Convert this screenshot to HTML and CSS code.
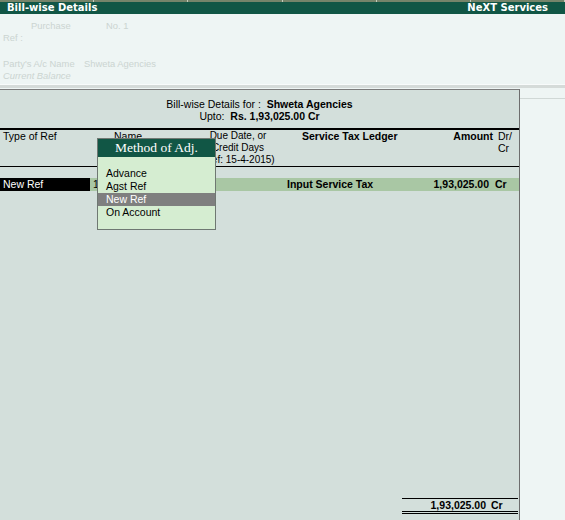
FILE: index.html
```html
<!DOCTYPE html>
<html>
<head>
<meta charset="utf-8">
<link rel="stylesheet" href="styles.css">
</head>
<body>
<div class="topstrip"><span></span><span></span><span></span><span></span><span></span><span></span></div>
<div class="titlebar"><span>Bill-wise Details</span><span>NeXT Services</span></div>
<div class="voucher">
  <div class="vrow"><span class="v-type">Purchase</span><span class="v-no">No. 1</span></div>
  <div class="vrow"><span>Ref :</span></div>
  <div class="vrow gap"><span class="v-label">Party's A/c Name</span><span>Shweta Agencies</span></div>
  <div class="vrow"><span class="italic">Current Balance</span></div>
</div>
<div class="band"></div>
<div class="main">
  <div class="panel">
    <div class="phead">
      <div>Bill-wise Details for :&nbsp; <b>Shweta Agencies</b></div>
      <div>Upto:&nbsp; <b>Rs. 1,93,025.00 Cr</b></div>
    </div>
    <div class="grid colhead">
      <div class="c1">Type of Ref</div>
      <div class="c2">Name</div>
      <div class="c3">Due Date, or<br>Credit Days<br>(Ref: 15-4-2015)</div>
      <div class="c4 b">Service Tax Ledger</div>
      <div class="c5 b">Amount</div>
      <div class="c6">Dr/<br>Cr</div>
    </div>
    <div class="grid datarow">
      <div class="c1 sel">New Ref</div>
      <div class="c2">1</div>
      <div class="c3"></div>
      <div class="c4 b">Input Service Tax</div>
      <div class="c5 b">1,93,025.00</div>
      <div class="c6 b">Cr</div>
    </div>
    <div class="spacer"></div>
    <div class="total"><span class="tamt">1,93,025.00</span><span class="tcr">Cr</span></div>
    <div class="popup">
      <div class="pophead">Method of Adj.</div>
      <ul class="poplist">
        <li>Advance</li>
        <li>Agst Ref</li>
        <li class="active">New Ref</li>
        <li>On Account</li>
      </ul>
    </div>
  </div>
  <div class="side"><div class="sideline"></div></div>
</div>
</body>
</html>
```
FILE: styles.css
```css
html, body {
  margin: 0;
  padding: 0;
}
body {
  width: 565px;
  height: 520px;
  overflow: hidden;
  background: #eef5f4;
  font-family: "Liberation Sans", Arial, sans-serif;
  font-size: 10.5px;
  color: #000;
  display: flex;
  flex-direction: column;
}
.topstrip {
  height: 2px;
  background: #76846a;
  display: flex;
}
.topstrip span {
  width: 94px;
  border-right: 1px solid #c4ccbc;
}
.titlebar {
  height: 12px;
  line-height: 12px;
  background: #115645;
  color: #fff;
  font-family: "DejaVu Sans", Verdana, sans-serif;
  font-weight: bold;
  font-size: 10px;
  display: flex;
  justify-content: space-between;
  padding: 0 17px 0 7px;
}
.voucher {
  height: 64px;
  padding: 6px 0 0 3px;
  color: #cbd4d1;
  font-size: 9.4px;
  box-sizing: content-box;
}
.vrow {
  height: 12px;
  line-height: 12px;
  display: flex;
}
.vrow.gap {
  margin-top: 14px;
}
.v-type {
  margin-left: 28px;
  width: 75px;
}
.v-label {
  width: 81px;
}
.italic {
  font-style: italic;
}
.band {
  height: 3px;
  background: #d5dbd9;
  border-top: 1px solid #f8fbfb;
  border-bottom: 1px solid #eef5f4;
}
.main {
  flex: 1;
  display: flex;
  min-height: 0;
}
.panel {
  position: relative;
  width: 519px;
  background: #d3dfdb;
  border-top: 1px solid #7c7c7c;
  border-right: 1px solid #6d6d6d;
  display: flex;
  flex-direction: column;
}
.phead {
  padding-top: 8px;
  text-align: center;
  line-height: 12px;
  border-bottom: 2px solid #000;
  padding-bottom: 6px;
}
.grid {
  display: grid;
  grid-template-columns: 90px 120px 75px 145px 63px 26px;
  line-height: 12px;
}
.grid > div {
  white-space: nowrap;
}
.colhead {
  border-bottom: 1px solid #000;
  height: 36px;
}
.b {
  font-weight: bold;
}
.colhead .c1 { padding-left: 3px; }
.colhead .c2 { padding-left: 24px; }
.colhead .c3 { margin-left: -19px; padding-right: 0; text-align: center; font-size: 10px; }
.colhead .c4 { padding-left: 17px; }
.colhead .c5 { text-align: right; }
.colhead .c6 { padding-left: 5px; }
.datarow {
  margin-top: 11px;
  height: 13px;
  line-height: 13px;
  background: #a9c7a4;
}
.datarow .sel {
  background: #000;
  color: #fff;
  padding-left: 3px;
}
.datarow .c2 { padding-left: 3px; }
.datarow .c4 { padding-left: 2px; }
.datarow .c5 { text-align: right; padding-right: 4px; }
.datarow .c6 { padding-left: 2px; }
.spacer {
  flex: 1;
}
.total {
  align-self: flex-end;
  width: 116px;
  margin-right: 1px;
  margin-bottom: 6px;
  border-top: 1px solid #000;
  border-bottom: 3px double #000;
  line-height: 12px;
  font-weight: bold;
  display: flex;
}
.tamt {
  width: 84px;
  text-align: right;
}
.tcr {
  margin-left: 5px;
}
.popup {
  position: absolute;
  left: 97px;
  top: 48px;
  width: 117px;
  background: #d5edd1;
  border: 1px solid #6f7872;
}
.pophead {
  height: 18px;
  line-height: 18px;
  background: #115645;
  color: #fff;
  text-align: center;
  font-family: "Liberation Serif", "Times New Roman", serif;
  font-size: 13.5px;
}
.poplist {
  list-style: none;
  margin: 0;
  padding: 10px 0;
}
.poplist li {
  height: 13px;
  line-height: 13px;
  padding-left: 8px;
}
.poplist li.active {
  background: #7f7f7f;
  color: #fff;
}
.side {
  flex: 1;
}
.sideline {
  height: 9px;
  border-bottom: 1px solid #d0d8d6;
}
```
